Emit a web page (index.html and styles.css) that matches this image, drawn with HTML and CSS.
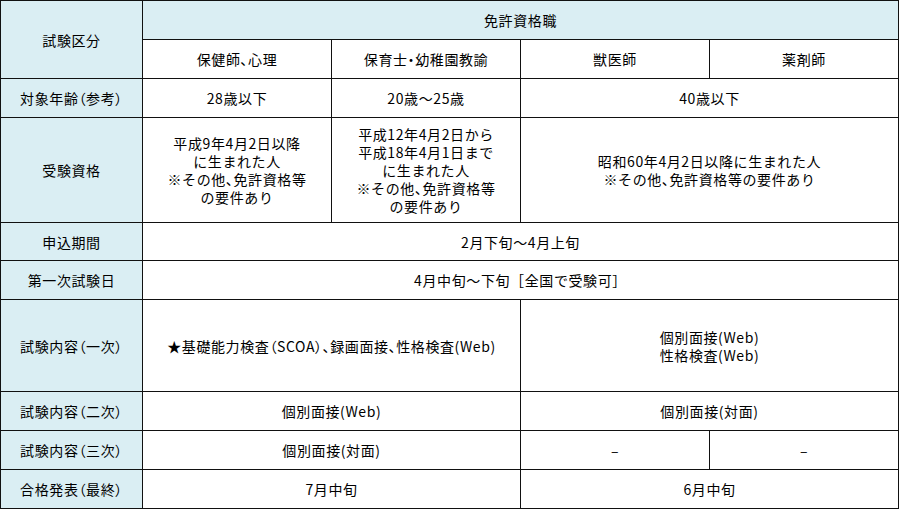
FILE: index.html
```html
<!DOCTYPE html>
<html lang="ja">
<head>
<meta charset="utf-8">
<link rel="stylesheet" href="styles.css">
</head>
<body>
<table class="exam">
  <colgroup>
    <col class="c-label">
    <col class="c-data">
    <col class="c-data">
    <col class="c-data">
    <col class="c-data">
  </colgroup>
  <tr class="r39">
    <th rowspan="2">試験区分</th>
    <th colspan="4">免許資格職</th>
  </tr>
  <tr class="r39">
    <td>保健師<span class="p">、</span>心理</td>
    <td>保育士<span class="p">・</span>幼稚園教諭</td>
    <td>獣医師</td>
    <td>薬剤師</td>
  </tr>
  <tr class="r39">
    <th>対象年齢<span class="p">（</span>参考<span class="p">）</span></th>
    <td>28歳以下</td>
    <td>20歳～25歳</td>
    <td colspan="2">40歳以下</td>
  </tr>
  <tr class="r105">
    <th>受験資格</th>
    <td><div class="ln">平成9年4月2日以降</div><div class="ln">に生まれた人</div><div class="ln">※その他<span class="p">、</span>免許資格等</div><div class="ln">の要件あり</div></td>
    <td><div class="ln">平成12年4月2日から</div><div class="ln">平成18年4月1日まで</div><div class="ln">に生まれた人</div><div class="ln">※その他<span class="p">、</span>免許資格等</div><div class="ln">の要件あり</div></td>
    <td colspan="2"><div class="ln">昭和60年4月2日以降に生まれた人</div><div class="ln">※その他<span class="p">、</span>免許資格等の要件あり</div></td>
  </tr>
  <tr class="r38">
    <th>申込期間</th>
    <td colspan="4">2月下旬～4月上旬</td>
  </tr>
  <tr class="r39">
    <th>第一次試験日</th>
    <td colspan="4">4月中旬～下旬［全国で受験可］</td>
  </tr>
  <tr class="r92">
    <th>試験内容<span class="p">（</span>一次<span class="p">）</span></th>
    <td colspan="2">★基礎能力検査<span class="p">（</span>SCOA<span class="p">）、</span>録画面接<span class="p">、</span>性格検査(Web)</td>
    <td colspan="2"><div class="ln">個別面接(Web)</div><div class="ln">性格検査(Web)</div></td>
  </tr>
  <tr class="r39">
    <th>試験内容<span class="p">（</span>二次<span class="p">）</span></th>
    <td colspan="2">個別面接(Web)</td>
    <td colspan="2">個別面接(対面)</td>
  </tr>
  <tr class="r39">
    <th>試験内容<span class="p">（</span>三次<span class="p">）</span></th>
    <td colspan="2">個別面接(対面)</td>
    <td>–</td>
    <td>–</td>
  </tr>
  <tr class="r39">
    <th>合格発表<span class="p">（</span>最終<span class="p">）</span></th>
    <td colspan="2">7月中旬</td>
    <td colspan="2">6月中旬</td>
  </tr>
</table>
</body>
</html>
```

FILE: styles.css
```css
html, body {
  margin: 0;
  padding: 0;
  background: #ffffff;
}

.exam {
  border-collapse: collapse;
  table-layout: fixed;
  width: 898px;
  font-family: "Noto Sans CJK JP", "Noto Sans", sans-serif;
  font-size: 14px;
  line-height: 18px;
  letter-spacing: 0.6px;
  color: #000;
}

.p {
  font-feature-settings: "palt" 1;
}

.ln {
  height: 18px;
  line-height: 18px;
  white-space: nowrap;
}

.c-label { width: 142px; }
.c-data { width: 189px; }

.exam th,
.exam td {
  border: 1px solid #111;
  padding: 0 4px;
  text-align: center;
  vertical-align: middle;
  font-weight: normal;
}

.exam th {
  background: #daeef3;
}

.exam td {
  background: #ffffff;
}

.r38 { height: 38px; }
.r39 { height: 39px; }
.r92 { height: 92px; }
.r105 { height: 105px; }
```
